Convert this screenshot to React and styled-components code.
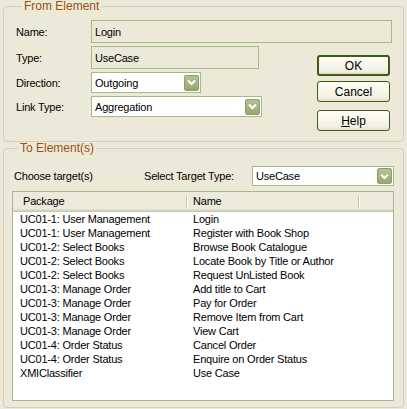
import React from "react";
import styled, { createGlobalStyle } from "styled-components";

const rows = [
  ["UC01-1: User Management", "Login"],
  ["UC01-1: User Management", "Register with Book Shop"],
  ["UC01-2: Select Books", "Browse Book Catalogue"],
  ["UC01-2: Select Books", "Locate Book by Title or Author"],
  ["UC01-2: Select Books", "Request UnListed Book"],
  ["UC01-3: Manage Order", "Add title to Cart"],
  ["UC01-3: Manage Order", "Pay for Order"],
  ["UC01-3: Manage Order", "Remove Item from Cart"],
  ["UC01-3: Manage Order", "View Cart"],
  ["UC01-4: Order Status", "Cancel Order"],
  ["UC01-4: Order Status", "Enquire on Order Status"],
  ["XMIClassifier", "Use Case"],
];

const GlobalStyle = createGlobalStyle`
  html, body {
    margin: 0;
    padding: 0;
    background: #ece9d8;
  }
  body {
    font-family: "Liberation Sans", Arial, sans-serif;
    font-size: 11px;
    letter-spacing: -0.2px;
    color: #000;
  }
`;

const Dialog = styled.div`
  width: 407px;
  height: 409px;
  background: #ece9d8;
  padding: 0 3px 0 3px;
  box-sizing: border-box;
  overflow: hidden;
`;

const Group = styled.fieldset`
  margin: ${(p) => p.$top || 0}px 0 0 0;
  border: 1px solid #d0d0bf;
  border-radius: 4px;
  padding: ${(p) => p.$pad};
  min-width: 0;
  box-sizing: border-box;
  height: ${(p) => p.$height}px;
`;

const Legend = styled.legend`
  color: #9a520f;
  font-size: 12px;
  letter-spacing: 0;
  line-height: 13px;
  padding: 0 2px;
  margin-left: 6px;
`;

const Row = styled.div`
  display: flex;
  align-items: center;
  height: ${(p) => p.$h}px;
  margin-bottom: ${(p) => p.$mb || 0}px;
`;

const Label = styled.span`
  width: 75px;
  flex: none;
`;

const Field = styled.div`
  width: ${(p) => p.$w}px;
  height: 100%;
  box-sizing: border-box;
  border: 1px solid #a5b98b;
  background: ${(p) => (p.$white ? "#fff" : "#ece9d8")};
  display: flex;
  align-items: center;
  justify-content: space-between;
  padding: 0 1px 0 3px;
`;

const DropButton = styled.span`
  width: 15px;
  height: 16px;
  box-sizing: border-box;
  border: 1px solid #8d9d6b;
  border-radius: 2px;
  background: linear-gradient(#b3c294, #98a872);
  display: flex;
  align-items: center;
  justify-content: center;
`;

const Lower = styled.div`
  display: flex;
  justify-content: space-between;
`;

const Buttons = styled.div`
  display: flex;
  flex-direction: column;
  padding-top: 9px;
  margin-right: 2px;
`;

const Button = styled.button`
  width: 73px;
  height: 21px;
  margin: 0 0 ${(p) => p.$mb || 0}px 0;
  padding: 0;
  box-sizing: border-box;
  border: ${(p) => (p.$default ? "2px" : "1px")} solid #3f5b14;
  border-radius: 3px;
  background: linear-gradient(#fffff8, #f3f1e4 80%, #e3dfc9);
  font-family: "Liberation Sans", Arial, sans-serif;
  font-size: 12px;
  color: #000;
  u {
    text-decoration: underline;
  }
`;

const ChooseRow = styled.div`
  display: flex;
  align-items: center;
  height: 20px;
  margin: 0 0 5px 2px;
`;

const ChooseLabel = styled.span`
  width: ${(p) => p.$w}px;
  flex: none;
`;

const List = styled.div`
  width: 382px;
  height: 210px;
  box-sizing: border-box;
  border: 1px solid #a5b98b;
  background: #fff;
`;

const Header = styled.div`
  display: grid;
  grid-template-columns: 174px 172px 1fr;
  height: 20px;
  background: #ebeadb;
  box-shadow: inset 0 -1px #cbc7b8, inset 0 -2px #d6d2c2, inset 0 -3px #e2decd;
`;

const HeadCell = styled.div`
  display: flex;
  align-items: center;
  padding: 0 0 3px ${(p) => p.$pl}px;
  position: relative;
  &::after {
    content: "";
    display: ${(p) => (p.$divider ? "block" : "none")};
    position: absolute;
    right: 0;
    top: 4px;
    height: 12px;
    width: 1px;
    background: #c7c5b2;
    box-shadow: 1px 0 #fff;
  }
`;

const ItemRow = styled.div`
  display: grid;
  grid-template-columns: 174px 1fr;
  height: 14px;
  line-height: 14px;
  white-space: nowrap;
`;

const Cell = styled.span`
  padding-left: ${(p) => p.$pl}px;
`;

const Chevron = () => (
  <svg width="9" height="7" viewBox="0 0 9 7">
    <path d="M1 1.5 L4.5 5 L8 1.5" fill="none" stroke="#fff" strokeWidth="2" />
  </svg>
);

function Combo({ w, value }) {
  return (
    <Field $w={w} $white>
      <span>{value}</span>
      <DropButton>
        <Chevron />
      </DropButton>
    </Field>
  );
}

export default function App() {
  return (
    <>
      <GlobalStyle />
      <Dialog>
        <Group $pad="7px 11px 0 12px" $height={142}>
          <Legend>From Element</Legend>
          <Row $h={23} $mb={3}>
            <Label>Name:</Label>
            <Field $w={301}>Login</Field>
          </Row>
          <Lower>
            <div>
              <Row $h={23} $mb={3}>
                <Label>Type:</Label>
                <Field $w={168}>UseCase</Field>
              </Row>
              <Row $h={21} $mb={3}>
                <Label>Direction:</Label>
                <Combo w={110} value="Outgoing" />
              </Row>
              <Row $h={21}>
                <Label>Link Type:</Label>
                <Combo w={171} value="Aggregation" />
              </Row>
            </div>
            <Buttons>
              <Button $default $mb={5}>OK</Button>
              <Button $mb={8}>Cancel</Button>
              <Button>
                <u>H</u>elp
              </Button>
            </Buttons>
          </Lower>
        </Group>
        <Group $top={0} $pad="11px 9px 0 8px" $height={266}>
          <Legend>To Element(s)</Legend>
          <ChooseRow>
            <ChooseLabel $w={130}>Choose target(s)</ChooseLabel>
            <ChooseLabel $w={108}>Select Target Type:</ChooseLabel>
            <Combo w={143} value="UseCase" />
          </ChooseRow>
          <List>
            <Header>
              <HeadCell $pl={10} $divider>Package</HeadCell>
              <HeadCell $pl={6} $divider>Name</HeadCell>
              <HeadCell />
            </Header>
            {rows.map(([pkg, name], i) => (
              <ItemRow key={i}>
                <Cell $pl={7}>{pkg}</Cell>
                <Cell $pl={6}>{name}</Cell>
              </ItemRow>
            ))}
          </List>
        </Group>
      </Dialog>
    </>
  );
}
